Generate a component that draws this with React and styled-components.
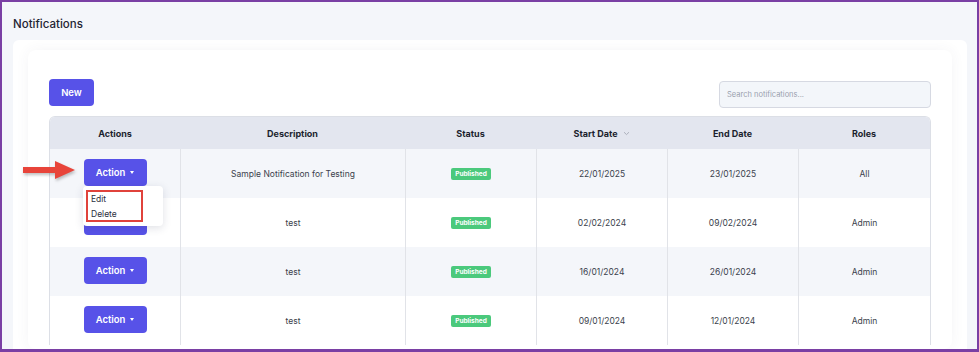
import React from "react";
import styled, { createGlobalStyle } from "styled-components";

const Global = createGlobalStyle`
  html, body { margin: 0; padding: 0; }
  body { font-family: Inter, "Noto Sans", Arial, sans-serif; }
  * { box-sizing: border-box; }
`;

const Frame = styled.div`
  width: 979px;
  height: 352px;
  overflow: hidden;
  background: #f4f6fa;
  border: 2px solid #7a3fa4;
  border-bottom-width: 3px;
  display: flex;
  flex-direction: column;
  padding: 0 10px 0 11px;
`;

const Title = styled.h1`
  margin: 0;
  height: 38px;
  display: flex;
  align-items: center;
  padding-top: 6px;
  font-size: 11.5px;
  font-weight: 500;
  color: #1f2433;
  letter-spacing: 0;
`;

const Card = styled.div`
  flex: 1;
  background: #fff;
  border-radius: 6px 6px 0 0;
  padding: 10px 15px 0 15px;
`;

const Panel = styled.div`
  height: 100%;
  border-radius: 8px;
  box-shadow: 0 0 14px rgba(60, 70, 110, 0.06);
  padding: 29px 21px 0 21px;
`;

const Toolbar = styled.div`
  display: flex;
  justify-content: space-between;
  align-items: flex-start;
  margin-bottom: 8px;
`;

const PrimaryButton = styled.button`
  background: #5752e8;
  color: #fff;
  border: none;
  border-radius: 4px;
  font-family: inherit;
  font-weight: 600;
  font-size: 9.5px;
  height: 27px;
  width: 45px;
  padding: 0;
  display: inline-flex;
  align-items: center;
  justify-content: center;
  gap: 5px;
  cursor: pointer;
`;

const ActionButton = styled(PrimaryButton)`
  width: 63px;
  margin-bottom: 3px;
`;

const Caret = styled.span`
  width: 0;
  height: 0;
  border-left: 2.5px solid transparent;
  border-right: 2.5px solid transparent;
  border-top: 3px solid #fff;
  margin-top: 1px;
`;

const Search = styled.input`
  margin-top: 2px;
  width: 212px;
  height: 27px;
  background: #f3f6fa;
  border: 1px solid #d6d9e2;
  border-radius: 4px;
  padding: 0 7px;
  font-family: inherit;
  font-size: 7.5px;
  color: #333;
  outline: none;
  &::placeholder { color: #9a9fae; }
`;

const Table = styled.div`
  display: grid;
  grid-template-columns: 130px 225px 131px 131px 131px 132px;
  border: 1px solid #dcdfe6;
  border-bottom: none;
  border-radius: 6px 6px 0 0;
  width: 882px;
`;

const Head = styled.div`
  background: #e3e6ef;
  height: 32px;
  display: flex;
  align-items: center;
  justify-content: center;
  gap: 5px;
  font-size: 9px;
  font-weight: 700;
  color: #1b1f2e;
  &:first-child { border-top-left-radius: 5px; }
  &:nth-child(6) { border-top-right-radius: 5px; }
`;

const Cell = styled.div`
  position: relative;
  height: 49px;
  display: flex;
  align-items: center;
  justify-content: center;
  font-size: 8.5px;
  color: #3b3f4c;
  background: ${(p) => (p.$alt ? "#f4f6fa" : "#ffffff")};
  border-left: ${(p) => (p.$first ? "none" : "1px solid #e1e3e8")};
`;

const Badge = styled.span`
  background: #4bc97c;
  color: #fff;
  font-weight: 700;
  font-size: 6.5px;
  padding: 0 4px;
  height: 12px;
  display: inline-flex;
  align-items: center;
  border-radius: 2px;
`;

const Menu = styled.div`
  position: absolute;
  left: 33px;
  top: 37px;
  width: 80px;
  height: 40px;
  background: #fff;
  border-radius: 4px;
  box-shadow: 0 2px 8px rgba(40, 50, 80, 0.15);
  padding: 4px 3px;
  z-index: 2;
`;

const Highlight = styled.div`
  border: 2px solid #e0423b;
  width: 57px;
  height: 32px;
  display: flex;
  flex-direction: column;
  justify-content: center;
  gap: 3px;
  padding-left: 3px;
`;

const MenuItem = styled.div`
  font-size: 8.5px;
  color: #2c3040;
  line-height: 12px;
`;

const Arrow = styled.svg`
  position: absolute;
  left: -28px;
  top: 10px;
  z-index: 2;
  filter: drop-shadow(1px 2px 1.5px rgba(0, 0, 0, 0.25));
`;

const rows = [
  { desc: "Sample Notification for Testing", start: "22/01/2025", end: "23/01/2025", roles: "All" },
  { desc: "test", start: "02/02/2024", end: "09/02/2024", roles: "Admin" },
  { desc: "test", start: "16/01/2024", end: "26/01/2024", roles: "Admin" },
  { desc: "test", start: "09/01/2024", end: "12/01/2024", roles: "Admin" },
];

export default function App() {
  return (
    <>
      <Global />
      <Frame>
        <Title>Notifications</Title>
        <Card>
          <Panel>
            <Toolbar>
              <PrimaryButton>New</PrimaryButton>
              <Search placeholder="Search notifications..." />
            </Toolbar>
            <Table>
              <Head>Actions</Head>
              <Head>Description</Head>
              <Head>Status</Head>
              <Head>
                Start Date
                <svg width="7" height="5" viewBox="0 0 7 5">
                  <path d="M1 1.2 L3.5 3.6 L6 1.2" fill="none" stroke="#a6aab6" strokeWidth="0.9" />
                </svg>
              </Head>
              <Head>End Date</Head>
              <Head>Roles</Head>
              {rows.map((r, i) => {
                const alt = i % 2 === 0;
                return (
                  <React.Fragment key={i}>
                    <Cell $alt={alt} $first>
                      <ActionButton>
                        Action <Caret />
                      </ActionButton>
                      {i === 0 && (
                        <>
                          <Arrow width="56" height="24" viewBox="0 0 56 24">
                            <path d="M1 8 L33 8 L33 2 L53 11 L33 20 L33 14 L1 14 Z" fill="#e8443a" />
                          </Arrow>
                          <Menu>
                            <Highlight>
                              <MenuItem>Edit</MenuItem>
                              <MenuItem>Delete</MenuItem>
                            </Highlight>
                          </Menu>
                        </>
                      )}
                    </Cell>
                    <Cell $alt={alt}>{r.desc}</Cell>
                    <Cell $alt={alt}>
                      <Badge>Published</Badge>
                    </Cell>
                    <Cell $alt={alt}>{r.start}</Cell>
                    <Cell $alt={alt}>{r.end}</Cell>
                    <Cell $alt={alt}>{r.roles}</Cell>
                  </React.Fragment>
                );
              })}
            </Table>
          </Panel>
        </Card>
      </Frame>
    </>
  );
}
